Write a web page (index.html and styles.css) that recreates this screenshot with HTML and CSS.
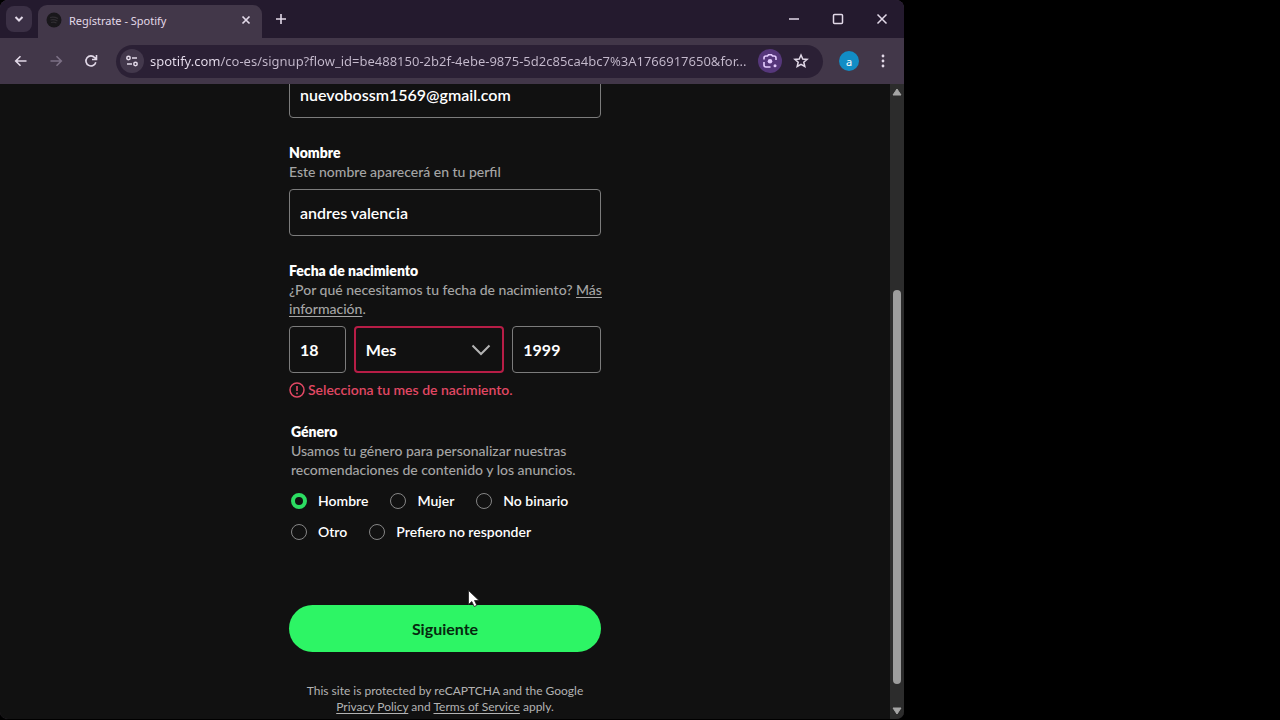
FILE: index.html
```html
<!DOCTYPE html>
<html lang="es">
<head>
<meta charset="utf-8">
<meta name="viewport" content="width=device-width, initial-scale=1">
<title>Regístrate - Spotify</title>
<link rel="stylesheet" href="styles.css">
</head>
<body>
<div class="desktop">
  <div class="window">
    <header class="tabstrip">
      <button class="tab-search" aria-label="Buscar pestañas"><svg width="10" height="6" viewBox="0 0 10 6"><path d="M1.5 1l3.5 3.5L8.500 1" fill="none" stroke="currentColor" stroke-width="2"/></svg></button>
      <div class="tab">
        <svg class="favicon" width="16" height="16" viewBox="0 0 16 16"><circle cx="8" cy="8" r="7.500" fill="#19171b"/><path d="M4 5.500q4-1 8 1M4.500 8q3.500-1 7 1M5 10.500q3-1 5.500.5" fill="none" stroke="#302d32" stroke-width="1.200"/></svg>
        <span class="tab-title">Regístrate - Spotify</span>
        <button class="tab-close" aria-label="Cerrar pestaña"><svg width="10" height="10" viewBox="0 0 10 10"><path d="M1.500 1.500l7 7m0-7l-7 7" stroke="currentColor" stroke-width="1.700"/></svg></button>
      </div>
      <button class="icon-button new-tab" aria-label="Nueva pestaña"><svg width="12" height="12" viewBox="0 0 12 12"><path d="M6 1v10M1 6h10" stroke="currentColor" stroke-width="1.600"/></svg></button>
      <div class="window-controls">
        <button aria-label="Minimizar"><svg width="12" height="12" viewBox="0 0 12 12"><path d="M1 6h10" stroke="currentColor" stroke-width="1.400"/></svg></button>
        <button aria-label="Maximizar"><svg width="12" height="12" viewBox="0 0 12 12"><rect x="1.500" y="1.500" width="9" height="9" rx="1" fill="none" stroke="currentColor" stroke-width="1.500"/></svg></button>
        <button aria-label="Cerrar"><svg width="12" height="12" viewBox="0 0 12 12"><path d="M1.500 1.500l9 9m0-9l-9 9" stroke="currentColor" stroke-width="1.500"/></svg></button>
      </div>
    </header>
    <div class="toolbar">
      <div class="nav-buttons">
        <button class="icon-button" aria-label="Atrás"><svg width="14" height="14" viewBox="0 0 14 14"><path d="M12.500 7H2m4.500-4.800L1.700 7l4.800 4.800" fill="none" stroke="currentColor" stroke-width="1.600"/></svg></button>
        <button class="icon-button" aria-label="Adelante" disabled><svg width="14" height="14" viewBox="0 0 14 14"><path d="M1.500 7H12M7.500 2.200L12.300 7l-4.800 4.800" fill="none" stroke="currentColor" stroke-width="1.600"/></svg></button>
        <button class="icon-button" aria-label="Recargar"><svg width="14" height="14" viewBox="0 0 14 14"><path d="M11.800 8.200A5 5 0 1 1 10.800 3.700L12.200 5M12.500 1v4.500H8" fill="none" stroke="currentColor" stroke-width="1.600"/></svg></button>
      </div>
      <div class="omnibox">
        <button class="site-info" aria-label="Información del sitio"><svg width="14" height="12" viewBox="0 0 14 12"><g fill="none" stroke="currentColor" stroke-width="1.500"><circle cx="3.500" cy="3" r="1.700"/><path d="M7 3h5M2 9h5"/><circle cx="10.500" cy="9" r="1.700"/></g></svg></button>
        <input class="address" type="text" aria-label="Dirección" value="spotify.com/co-es/signup?flow_id=be488150-2b2f-4ebe-9875-5d2c85ca4bc7%3A1766917650&amp;for...">
        <button class="lens" aria-label="Buscar con Lens"><svg width="16" height="16" viewBox="0 0 16 16"><path d="M2 6.500V5q0-2 2-2h1.500L6.500 1.700h3L10.500 3H12q2 0 2 2v2M2 9v3q0 2 2 2h4.500" fill="none" stroke="currentColor" stroke-width="1.600"/><circle cx="8" cy="8.300" r="2.300" fill="currentColor"/><circle cx="13" cy="12.800" r="1.500" fill="currentColor"/></svg></button>
        <button class="star" aria-label="Añadir a favoritos"><svg width="16" height="16" viewBox="0 0 16 16"><path d="M8 2l1.750 4 4.350.4-3.300 2.850 1 4.250L8 11.250 4.200 13.500l1-4.250L1.900 6.400 6.250 6z" fill="none" stroke="currentColor" stroke-width="1.500"/></svg></button>
      </div>
      <button class="avatar" aria-label="Perfil">a</button>
      <button class="icon-button menu" aria-label="Menú"><svg width="4" height="14" viewBox="0 0 4 14" fill="currentColor"><circle cx="2" cy="2" r="1.400"/><circle cx="2" cy="7" r="1.400"/><circle cx="2" cy="12" r="1.400"/></svg></button>
    </div>
    <div class="viewport">
      <main class="page">
        <form class="signup">
          <input class="field email" type="text" aria-label="Correo electrónico" value="nuevobossm1569@gmail.com">

          <div class="group">
            <label class="label" for="name">Nombre</label>
            <p class="hint">Este nombre aparecerá en tu perfil</p>
            <input class="field" id="name" type="text" value="andres valencia">
          </div>

          <div class="group" role="group" aria-labelledby="birth">
            <span class="label" id="birth">Fecha de nacimiento</span>
            <p class="hint">¿Por qué necesitamos tu fecha de nacimiento? <a href="#">Más información</a>.</p>
            <div class="date">
              <input class="field" type="text" aria-label="Día" value="18">
              <div class="select-wrap">
                <select class="field invalid" aria-label="Mes" aria-describedby="month-error"><option>Mes</option></select>
                <svg class="chevron" width="20" height="12" viewBox="0 0 20 12"><path d="M1.500 1.500L10 10l8.500-8.500" fill="none" stroke="currentColor" stroke-width="2"/></svg>
              </div>
              <input class="field" type="text" aria-label="Año" value="1999">
            </div>
            <p class="error" id="month-error"><svg width="16" height="16" viewBox="0 0 16 16"><circle cx="8" cy="8" r="7" fill="none" stroke="currentColor" stroke-width="1.500"/><path d="M8 4v5M8 10.500v1.700" stroke="currentColor" stroke-width="1.600"/></svg>Selecciona tu mes de nacimiento.</p>
          </div>

          <fieldset class="gender">
            <legend class="label">Género</legend>
            <p class="hint">Usamos tu género para personalizar nuestras recomendaciones de contenido y los anuncios.</p>
            <div class="options">
              <label><input type="radio" name="gender" checked>Hombre</label>
              <label><input type="radio" name="gender">Mujer</label>
              <label><input type="radio" name="gender">No binario</label>
              <label><input type="radio" name="gender">Otro</label>
              <label><input type="radio" name="gender">Prefiero no responder</label>
            </div>
          </fieldset>

          <button class="submit" type="button">Siguiente</button>
          <p class="legal">This site is protected by reCAPTCHA and the Google <a href="#">Privacy Policy</a> and <a href="#">Terms of Service</a> apply.</p>
        </form>
      </main>
      <div class="scrollbar">
        <svg width="10" height="8" viewBox="0 0 10 8"><path d="M5 1l4 6H1z" fill="currentColor" stroke="currentColor" stroke-linejoin="round"/></svg>
        <div class="track"><div class="thumb"></div></div>
        <svg width="10" height="8" viewBox="0 0 10 8"><path d="M5 7l4-6H1z" fill="currentColor" stroke="currentColor" stroke-linejoin="round"/></svg>
      </div>
    </div>
  </div>
  <svg class="cursor" width="14" height="20" viewBox="0 0 14 20"><path d="M1.500 1.500v14l3.300-3 2.400 5 2.600-1.200-2.300-4.800H12z" fill="#fff" stroke="#222" stroke-width=".8"/></svg>
</div>
</body>
</html>
```
FILE: styles.css
```css
* {
  box-sizing: border-box;
}

body {
  margin: 0;
  background: #000;
  font-family: Lato, sans-serif;
  color: #fff;
}

button,
input,
select {
  font: inherit;
  color: inherit;
}

button {
  display: flex;
  align-items: center;
  justify-content: center;
  padding: 0;
  border: 0;
  background: none;
}

p {
  margin: 0;
}

a {
  color: inherit;
  text-underline-offset: 2px;
}

.desktop {
  position: relative;
  display: grid;
  grid-template-columns: minmax(0, 113fr) minmax(0, 47fr);
  height: 100vh;
}

.window {
  display: flex;
  flex-direction: column;
  min-height: 0;
  border-radius: 8px;
  border-bottom: 1px solid #000;
  overflow: hidden;
  background: #423749;
}

.tabstrip,
.toolbar {
  flex: none;
  display: flex;
  align-items: center;
  color: #e2d9e8;
  font-family: "Noto Sans", sans-serif;
}

.tabstrip {
  height: 38px;
  padding-left: 6px;
  background: #241a2e;
}

.tab-search {
  width: 26px;
  height: 26px;
  border-radius: 8px;
  background: #3b3045;
}

.tab {
  display: flex;
  align-items: center;
  gap: 7px;
  align-self: flex-end;
  width: 224px;
  height: 33px;
  margin-left: 6px;
  padding: 0 8px 3px;
  border-radius: 9px 9px 0 0;
  background: #423749;
}

.tab-title {
  flex: 1;
  font-size: 11px;
}

.tab-close {
  width: 16px;
  height: 16px;
}

.icon-button {
  width: 24px;
  height: 24px;
}

.icon-button:disabled {
  color: #7c7085;
}

.new-tab {
  margin-left: 7px;
}

.window-controls {
  display: flex;
  align-self: stretch;
  margin-left: auto;
}

.window-controls button {
  width: 44px;
}

.toolbar {
  height: 46px;
  padding: 0 9px;
}

.nav-buttons {
  display: flex;
  gap: 11px;
}

.omnibox {
  flex: 1;
  display: flex;
  align-items: center;
  min-width: 0;
  height: 33px;
  margin-left: 13px;
  padding: 0 10px 0 4px;
  border-radius: 17px;
  background: #2b2035;
}

.site-info {
  width: 24px;
  height: 24px;
  border-radius: 50%;
  background: #43384c;
}

.address {
  flex: 1;
  min-width: 0;
  margin-left: 6px;
  padding: 0;
  border: 0;
  background: linear-gradient(90deg, #e9e0ef 71px, #c5bacd 71px);
  background-clip: text;
  color: transparent;
  font-size: 13px;
}

.lens {
  width: 24px;
  height: 24px;
  border-radius: 50%;
  background: #56377b;
  color: #e5ccff;
}

.star {
  width: 24px;
  height: 24px;
  margin-left: 7px;
}

.avatar {
  width: 20px;
  height: 20px;
  margin-left: 16px;
  border-radius: 50%;
  background: #128dc5;
  color: #fff;
  font-size: 11px;
}

.menu {
  margin-left: 12px;
}

.viewport {
  flex: 1;
  display: flex;
  min-height: 0;
  overflow: hidden;
  background: #111;
}

.page {
  flex: 1;
  min-width: 0;
  overflow: hidden;
}

.signup {
  display: flex;
  flex-direction: column;
  max-width: 312px;
  margin: -13px auto 0;
  font-size: 14px;
  line-height: 19px;
}

.field {
  display: block;
  width: 100%;
  height: 47px;
  padding: 0 10px;
  border: 1px solid #7c7c7c;
  border-radius: 4px;
  background: #111;
  font-size: 16px;
  font-weight: 700;
}

.email,
#name {
  font-weight: 600;
}

.group {
  margin-top: 25px;
}

.label {
  display: block;
  padding: 0;
  font-weight: 800;
}

.hint {
  margin-right: -8px;
  color: #a5a5a5;
  font-weight: 500;
}

.hint + .field,
.date {
  margin-top: 8px;
}

.date {
  display: grid;
  grid-template-columns: 57fr 151fr 89fr;
  gap: 8px;
}

.date .field {
  min-width: 0;
}

.select-wrap {
  position: relative;
}

.field.invalid {
  appearance: none;
  border: 2px solid #b71d46;
}

.chevron {
  position: absolute;
  top: 18px;
  right: 13px;
  color: #b3b3b3;
  pointer-events: none;
}

.error {
  display: flex;
  align-items: center;
  gap: 3px;
  margin-top: 7px;
  color: #e14864;
  font-weight: 600;
}

.gender {
  min-width: 0;
  margin: 23px 0 0;
  padding: 0 2px;
  border: 0;
}

.options {
  display: flex;
  flex-wrap: wrap;
  gap: 12px 22px;
  margin-top: 12px;
  font-weight: 600;
}

.options label {
  display: flex;
  align-items: center;
  gap: 11px;
}

.options input {
  appearance: none;
  width: 16px;
  height: 16px;
  margin: 0;
  border: 1px solid #858585;
  border-radius: 50%;
}

.options input:checked {
  border: 4px solid #2cdd62;
}

.submit {
  height: 47px;
  margin-top: 64px;
  border-radius: 24px;
  background: #2df565;
  color: #06280f;
  font-size: 16px;
  font-weight: 700;
}

.legal {
  margin-top: 31px;
  padding: 0 12px;
  color: #b3b3b3;
  font-size: 12px;
  line-height: 16px;
  text-align: center;
}

.scrollbar {
  display: flex;
  flex-direction: column;
  align-items: center;
  width: 14px;
  padding: 4px 0;
  background: #2c2c2c;
  color: #a5a5a5;
}

.track {
  flex: 1;
  display: flex;
  flex-direction: column;
  justify-content: flex-end;
  padding-bottom: 23px;
}

.thumb {
  width: 8px;
  height: 67%;
  border-radius: 4px;
  background: #9d9d9d;
}

.cursor {
  position: absolute;
  left: 467px;
  top: 589px;
}
```
